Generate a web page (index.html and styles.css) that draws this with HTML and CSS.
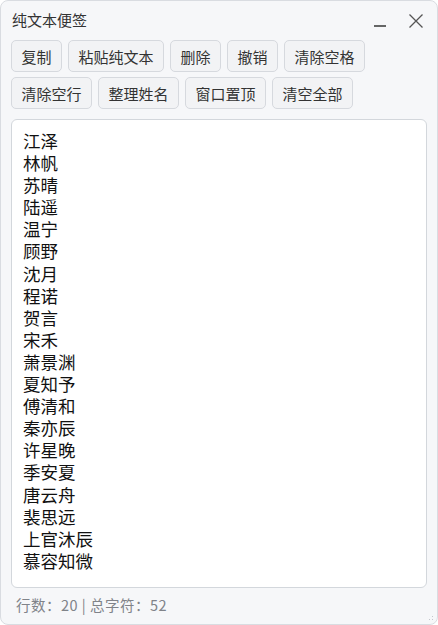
FILE: index.html
```html
<!DOCTYPE html>
<html lang="zh-CN">
<head>
    <meta charset="UTF-8">
    <meta name="viewport" content="width=device-width, initial-scale=1.0">
    <title>纯文本便签</title>
    <link rel="stylesheet" href="styles.css">
</head>
<body>
    <div class="window">
        <div class="titlebar">
            <span class="title">纯文本便签</span>
            <div class="win-controls">
                <button class="win-btn" title="最小化">
                    <svg width="14" height="14" viewBox="0 0 14 14"><line x1="1" y1="12" x2="13" y2="12" stroke="#555" stroke-width="1.8"/></svg>
                </button>
                <button class="win-btn" title="关闭">
                    <svg width="16" height="16" viewBox="0 0 16 16"><path d="M1.5 1.5 L14.5 14.5 M14.5 1.5 L1.5 14.5" stroke="#555" stroke-width="1.3" fill="none"/></svg>
                </button>
            </div>
        </div>

        <div class="toolbar">
            <button class="tool-btn">复制</button>
            <button class="tool-btn">粘贴纯文本</button>
            <button class="tool-btn">删除</button>
            <button class="tool-btn">撤销</button>
            <button class="tool-btn">清除空格</button>
            <button class="tool-btn">清除空行</button>
            <button class="tool-btn">整理姓名</button>
            <button class="tool-btn">窗口置顶</button>
            <button class="tool-btn">清空全部</button>
        </div>

        <textarea id="note" class="note" spellcheck="false">江泽
林帆
苏晴
陆遥
温宁
顾野
沈月
程诺
贺言
宋禾
萧景渊
夏知予
傅清和
秦亦辰
许星晚
季安夏
唐云舟
裴思远
上官沐辰
慕容知微</textarea>

        <div class="statusbar">
            <span id="stats">行数：20 | 总字符：52</span>
            <span class="grip"></span>
        </div>
    </div>
</body>
</html>
```

FILE: styles.css
```css
/* 便签窗口 */
html, body {
    margin: 0;
    height: 100%;
}
body {
    font-family: "Noto Sans CJK SC", "Noto Sans", sans-serif;
    background-color: #fff;
    color: #333;
}
.window {
    box-sizing: border-box;
    height: 625px;
    background-color: #f6f7f9;
    border: 1px solid #d9dce1;
    border-radius: 8px;
    display: flex;
    flex-direction: column;
}
.titlebar {
    height: 39px;
    display: flex;
    align-items: center;
    justify-content: space-between;
    padding: 0 8px 0 11px;
}
.title {
    font-size: 15px;
    color: #333;
    margin-top: -2px;
}
.win-controls {
    display: flex;
    gap: 10px;
    align-items: center;
}
.win-btn {
    background: none;
    border: none;
    padding: 0;
    width: 26px;
    height: 26px;
    display: flex;
    align-items: center;
    justify-content: center;
    cursor: pointer;
}
.toolbar {
    display: flex;
    flex-wrap: wrap;
    gap: 5px 6px;
    padding: 0 10px;
}
.tool-btn {
    height: 32px;
    padding: 0 9.5px;
    font-family: inherit;
    font-size: 15px;
    color: #333;
    background-color: #f2f3f5;
    border: 1px solid #d6d9de;
    border-radius: 5px;
    cursor: pointer;
}
.tool-btn:hover {
    background-color: #e8eaee;
}
.note {
    margin: 10px 10px 0;
    height: 469px;
    box-sizing: border-box;
    padding: 10px 11px;
    font-family: "Noto Sans CJK SC", sans-serif;
    font-size: 17.5px;
    line-height: 22.1px;
    color: #111;
    background-color: #fff;
    border: 1px solid #d3d7dc;
    border-radius: 6px;
    resize: none;
    outline: none;
}
.statusbar {
    flex: 1;
    position: relative;
    display: flex;
    align-items: center;
    padding: 0 15px 3px;
    font-size: 14.5px;
    letter-spacing: 0.5px;
    color: #808389;
}
.grip {
    position: absolute;
    right: 2px;
    bottom: 2px;
    width: 10px;
    height: 10px;
    background-image: radial-gradient(circle, #c3c6cc 0.8px, transparent 1px);
    background-size: 3px 3px;
    clip-path: polygon(100% 0, 100% 100%, 0 100%);
}
```
